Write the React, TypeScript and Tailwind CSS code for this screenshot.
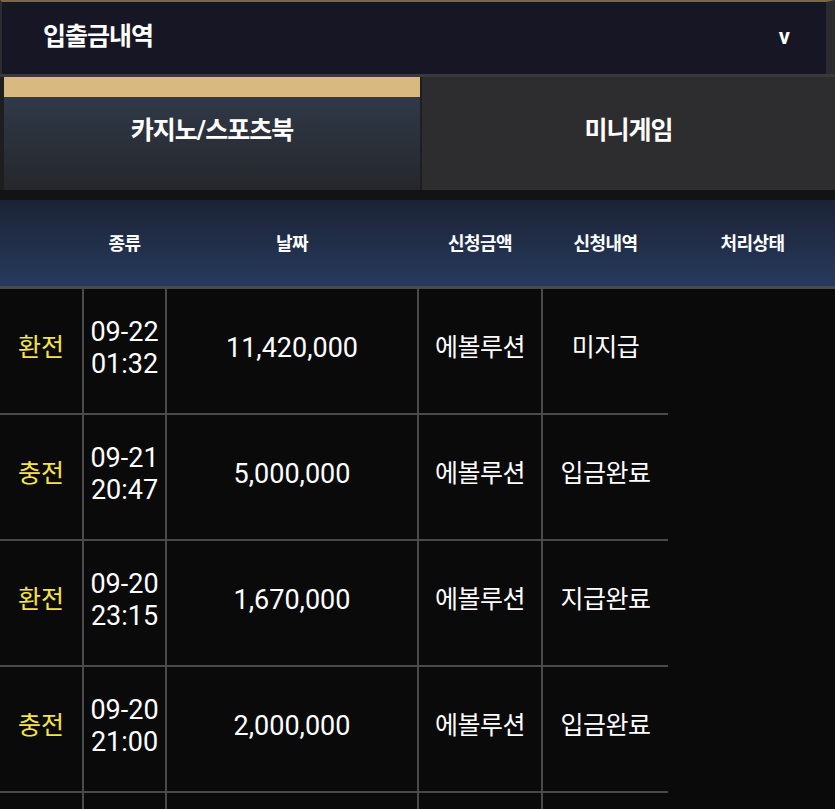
import React from "react";

const rows = [
  { type: "환전", date: "09-22", time: "01:32", amount: "11,420,000", vendor: "에볼루션", status: "미지급" },
  { type: "충전", date: "09-21", time: "20:47", amount: "5,000,000", vendor: "에볼루션", status: "입금완료" },
  { type: "환전", date: "09-20", time: "23:15", amount: "1,670,000", vendor: "에볼루션", status: "지급완료" },
  { type: "충전", date: "09-20", time: "21:00", amount: "2,000,000", vendor: "에볼루션", status: "입금완료" },
];

const headers = ["", "종류", "날짜", "신청금액", "신청내역", "처리상태"];

export default function App() {
  return (
    <div className="w-[835px] h-[809px] overflow-hidden bg-[#0a0a0a] text-white font-['Roboto','Noto_Sans_CJK_KR',sans-serif]">
      {/* Title bar */}
      <div className="h-[74px] flex items-center justify-between bg-[#161625] border-t-2 border-t-[#7b6944] border-l-2 border-l-[#2c2c34] border-r-[9px] border-r-[#2a2a2f] pl-[41px] pr-[36px] pb-[2px]">
        <span className="text-[25px] font-bold tracking-[-1px]">입출금내역</span>
        <span className="text-[22px] font-bold leading-none">v</span>
      </div>
      <div className="h-[3px] bg-[#38383d]" />

      {/* Tabs */}
      <div className="h-[113px] flex bg-[#1e1e21] pl-[4px]">
        <div className="w-[416px] flex flex-col">
          <div className="h-[20px] bg-[#d8b97f]" />
          <div className="flex-1 flex items-center justify-center bg-gradient-to-b from-[#303948] to-[#25272b] pb-[26px]">
            <span className="text-[25px] font-bold tracking-[-1px]">카지노/스포츠북</span>
          </div>
        </div>
        <div className="flex-1 flex items-center justify-center bg-[#2d2d2f] border-l-2 border-[#1f1f21] pb-[6px]">
          <span className="text-[25px] font-bold tracking-[-1px]">미니게임</span>
        </div>
      </div>
      <div className="h-[10px] bg-[#131316]" />

      {/* Table head */}
      <div className="h-[89px] grid grid-cols-[82px_81px_250px_122px_125px_1fr] gap-x-[2px] items-center bg-gradient-to-b from-[#1b2335] to-[#273a5e] border-b-[3px] border-[#4a4a4c]">
        {headers.map((h, i) => (
          <div key={i} className="text-center text-[18px] font-bold tracking-[-0.5px]">
            {h}
          </div>
        ))}
      </div>

      {/* Table body */}
      <div className="flex">
        <div className="w-[668px] grid grid-cols-[82px_81px_250px_122px_125px] auto-rows-[124px] gap-[2px] bg-[#4a4a4c]">
          {rows.map((r, i) => (
            <React.Fragment key={i}>
              <div className="bg-[#0a0a0a] flex items-center justify-center pb-[6px] text-[25px] text-[#f5e441]">{r.type}</div>
              <div className="bg-[#0a0a0a] flex flex-col items-center justify-center pb-[6px] text-[27px] leading-[32px]">
                <span>{r.date}</span>
                <span>{r.time}</span>
              </div>
              <div className="bg-[#0a0a0a] flex items-center justify-center pb-[6px] text-[27px]">{r.amount}</div>
              <div className="bg-[#0a0a0a] flex items-center justify-center pb-[6px] text-[25px] tracking-[-0.5px]">{r.vendor}</div>
              <div className="bg-[#0a0a0a] flex items-center justify-center pb-[6px] text-[25px] tracking-[-0.5px]">{r.status}</div>
            </React.Fragment>
          ))}
          {/* next row, only its top shows */}
          <div className="bg-[#0a0a0a]" />
          <div className="bg-[#0a0a0a]" />
          <div className="bg-[#0a0a0a]" />
          <div className="bg-[#0a0a0a]" />
          <div className="bg-[#0a0a0a]" />
        </div>
        <div className="flex-1 bg-[#0a0a0a]" />
      </div>
    </div>
  );
}
